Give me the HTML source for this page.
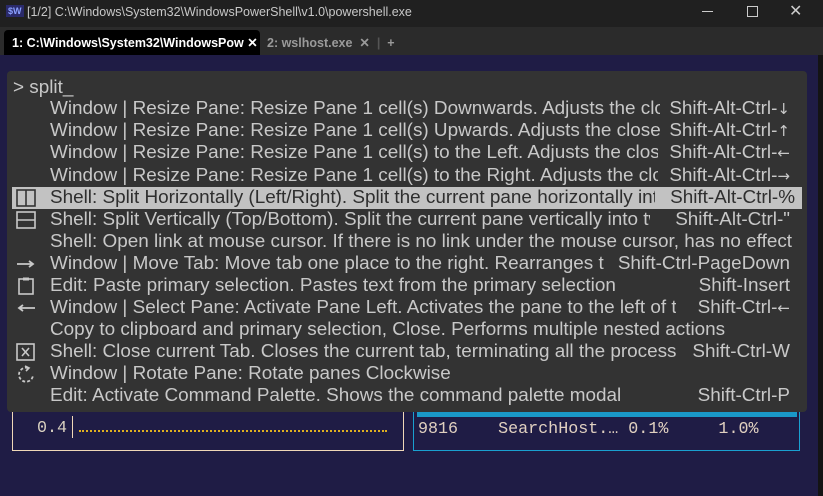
<!DOCTYPE html><html><head><style>
body{margin:0;width:823px;height:496px;overflow:hidden;background:#1f1c45;font-family:"Liberation Sans",sans-serif;position:relative}
.t{position:absolute;left:0;top:0;width:823px;height:27px;background:#202020;color:#c8c8c8;font-size:12.5px}
.tb{position:absolute;left:0;top:27px;width:823px;height:28px;background:#2b2b2b}
.pal{position:absolute;left:7px;top:71px;width:800px;height:341px;background:#333;border-radius:4px}
.r{position:absolute;left:0;width:795px;height:22px;color:#c8c8c8;font-size:18.9px;line-height:22px;white-space:nowrap}
.d{position:absolute;left:43px;overflow:hidden}
.k{position:absolute;right:12px}
.a{font-family:"DejaVu Sans",sans-serif;font-size:15px}
.ic{position:absolute;left:9px;top:2px}
.sel{background:#c2c2c2;color:#2e2e2e;left:5px;width:790px}
.sel .d{left:38px}.sel .k{right:7px}.sel .ic{left:4px}
</style></head><body>
<div class="t"><span style="position:absolute;left:6px;top:5px;background:#2a2a6a;color:#8aa0ff;font-size:9px;font-weight:bold;padding:1px 2px">$W</span><span style="position:absolute;left:27px;top:5px">[1/2] C:\Windows\System32\WindowsPowerShell\v1.0\powershell.exe</span>
<span style="position:absolute;left:702px;top:11px;width:11px;border-top:1px solid #ccc"></span>
<span style="position:absolute;left:747px;top:6px;width:9px;height:9px;border:1px solid #ccc"></span>
<span style="position:absolute;left:789px;top:1px;font-size:16px;color:#ccc">✕</span></div>
<div class="tb"><div style="position:absolute;left:4px;top:3px;width:256px;height:25px;background:#000;border-radius:4px 4px 0 0;color:#fff;font-size:12.5px;font-weight:bold;line-height:26px;padding-left:8px;box-sizing:border-box">1: C:\Windows\System32\WindowsPow ✕</div>
<div style="position:absolute;left:267px;top:3px;color:#9a9a9a;font-size:12.5px;font-weight:bold;line-height:26px">2: wslhost.exe &nbsp;✕ &nbsp;<span style="color:#555">|</span> &nbsp;+</div></div>
<div style="position:absolute;left:818px;top:55px;width:5px;height:441px;background:#141414"></div>
<div style="position:absolute;left:12px;top:400px;width:390px;height:50px;border:1px solid #f0d8b8;border-top:none;color:#d8d0c0;font-family:'Liberation Mono',monospace;font-size:16.7px">
<span style="position:absolute;left:24px;top:19px">0.4</span><span style="position:absolute;left:59px;top:16px;height:22px;border-left:1px solid #f0d8b8"></span>
<span style="position:absolute;left:66px;top:30px;width:308px;height:0;border-top:2px dotted #e0b020"></span></div>
<div style="position:absolute;left:413px;top:400px;width:385px;height:50px;border:1px solid #1aa0d0;border-top:none;color:#e0d0c0;font-family:'Liberation Mono',monospace;font-size:16.7px">
<div style="position:absolute;left:3px;top:10px;width:380px;height:7px;background:#1a98c8"></div>
<span style="position:absolute;left:4px;top:20px;white-space:pre">9816    SearchHost.… 0.1%     1.0%</span></div>
<div class="pal">
<div class="r" style="top:6px;left:6px">&gt; split_</div>
<div class="r" style="top:27px"><span class="d" style="width:610px">Window | Resize Pane: Resize Pane 1 cell(s) Downwards. Adjusts the closest</span><span class="k">Shift-Alt-Ctrl-<span class="a">↓</span></span></div>
<div class="r" style="top:49px"><span class="d" style="width:610px">Window | Resize Pane: Resize Pane 1 cell(s) Upwards. Adjusts the closest</span><span class="k">Shift-Alt-Ctrl-<span class="a">↑</span></span></div>
<div class="r" style="top:71px"><span class="d" style="width:608px">Window | Resize Pane: Resize Pane 1 cell(s) to the Left. Adjusts the closest</span><span class="k">Shift-Alt-Ctrl-<span class="a">←</span></span></div>
<div class="r" style="top:94px"><span class="d" style="width:608px">Window | Resize Pane: Resize Pane 1 cell(s) to the Right. Adjusts the closest</span><span class="k">Shift-Alt-Ctrl-<span class="a">→</span></span></div>
<div class="r sel" style="top:116px"><svg class="ic" width="20" height="18"><rect x="1" y="1" width="18" height="16" fill="none" stroke="#333" stroke-width="1.6"/><line x1="10" y1="1" x2="10" y2="17" stroke="#333" stroke-width="1.6"/></svg><span class="d" style="width:605px">Shell: Split Horizontally (Left/Right). Split the current pane horizontally into</span><span class="k">Shift-Alt-Ctrl-%</span></div>
<div class="r" style="top:138px"><svg class="ic" width="20" height="18"><rect x="1" y="1" width="18" height="16" fill="none" stroke="#c8c8c8" stroke-width="1.6"/><line x1="1" y1="9" x2="19" y2="9" stroke="#c8c8c8" stroke-width="1.6"/></svg><span class="d" style="width:600px">Shell: Split Vertically (Top/Bottom). Split the current pane vertically into two</span><span class="k">Shift-Alt-Ctrl-"</span></div>
<div class="r" style="top:160px"><span class="d">Shell: Open link at mouse cursor. If there is no link under the mouse cursor, has no effect</span></div>
<div class="r" style="top:182px"><svg class="ic" width="20" height="18"><path d="M1 9H17M13 6L17 9L13 12" fill="none" stroke="#c8c8c8" stroke-width="1.8"/></svg><span class="d" style="width:554px">Window | Move Tab: Move tab one place to the right. Rearranges the tabs</span><span class="k">Shift-Ctrl-PageDown</span></div>
<div class="r" style="top:204px"><svg class="ic" width="20" height="18"><rect x="3" y="2" width="14" height="15" fill="none" stroke="#c8c8c8" stroke-width="1.6"/><rect x="7" y="0.5" width="6" height="3" fill="#c8c8c8"/></svg><span class="d">Edit: Paste primary selection. Pastes text from the primary selection</span><span class="k">Shift-Insert</span></div>
<div class="r" style="top:226px"><svg class="ic" width="20" height="18"><path d="M19 9H3M7 6L3 9L7 12" fill="none" stroke="#c8c8c8" stroke-width="1.8"/></svg><span class="d" style="width:626px">Window | Select Pane: Activate Pane Left. Activates the pane to the left of the</span><span class="k">Shift-Ctrl-<span class="a">←</span></span></div>
<div class="r" style="top:248px"><span class="d">Copy to clipboard and primary selection, Close. Performs multiple nested actions</span></div>
<div class="r" style="top:270px"><svg class="ic" width="20" height="18"><rect x="1" y="1" width="17" height="16" fill="none" stroke="#c8c8c8" stroke-width="1.6"/><path d="M6 5L13 13M13 5L6 13" stroke="#c8c8c8" stroke-width="1.6"/></svg><span class="d">Shell: Close current Tab. Closes the current tab, terminating all the process</span><span class="k">Shift-Ctrl-W</span></div>
<div class="r" style="top:292px"><svg class="ic" width="20" height="18"><path d="M12 3A7 7 0 1 0 17 10" fill="none" stroke="#c8c8c8" stroke-width="1.8" stroke-dasharray="3 2"/><path d="M9 1L13 3L10 6" fill="none" stroke="#c8c8c8" stroke-width="1.6"/></svg><span class="d">Window | Rotate Pane: Rotate panes Clockwise</span></div>
<div class="r" style="top:314px"><span class="d">Edit: Activate Command Palette. Shows the command palette modal</span><span class="k">Shift-Ctrl-P</span></div>
</div>
</body></html>
